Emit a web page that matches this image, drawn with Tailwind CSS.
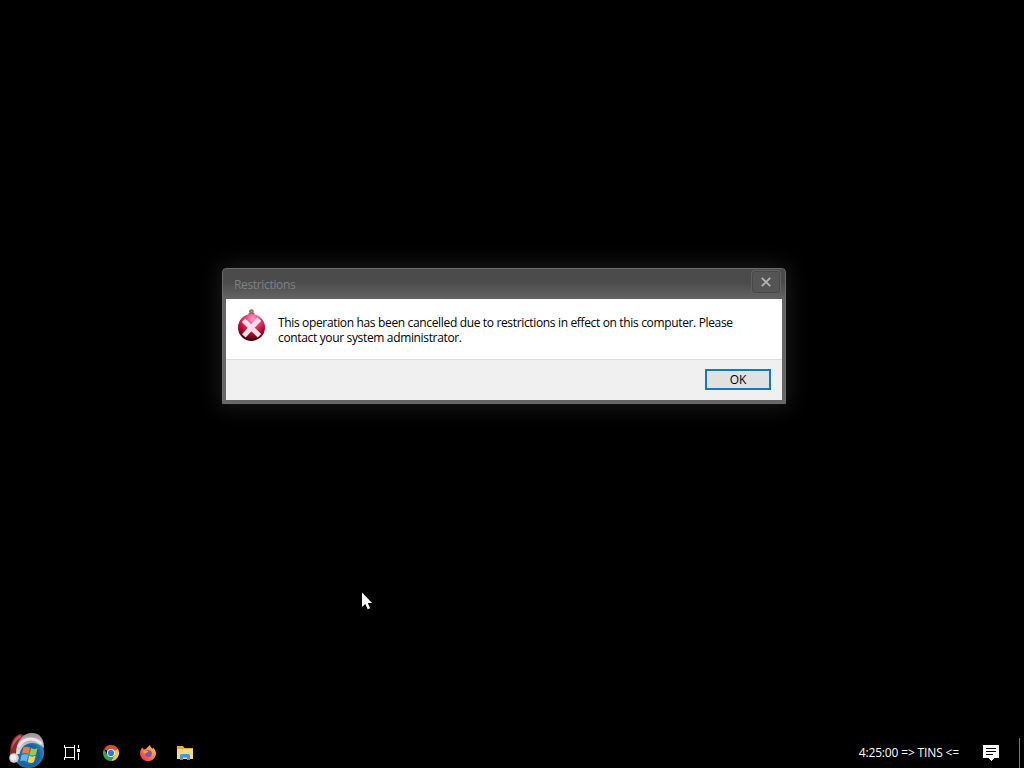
<!DOCTYPE html>
<html lang="en">
<head>
  <meta charset="UTF-8" />
  <meta name="viewport" content="width=device-width, initial-scale=1.0"/>
  <title>Restrictions</title>
  <script src="https://cdn.jsdelivr.net/npm/@tailwindcss/browser@4"></script>
</head>
<body class="bg-black overflow-hidden font-['Open_Sans','Noto_Sans',sans-serif]">
  <div class="relative w-[1024px] h-[768px] flex flex-col justify-end overflow-hidden">

    <!-- dialog window -->
    <div class="absolute left-[222px] top-[268px] w-[564px] h-[136px] flex flex-col rounded-t-[4px] border border-[#6b6b6b] px-[3px] pb-[3px] bg-linear-to-b from-[#4b4b4b] from-[13px] to-[#666666] to-[31px] shadow-[0_0_22px_3px_rgba(255,255,255,0.10)]">
      <div class="h-[30px] shrink-0 flex items-start justify-between">
        <h1 class="pl-2 pt-[8px] text-[12px] leading-4 tracking-[-0.34px] text-[#7b8287]">Restrictions</h1>
        <button class="mt-[2px] mr-[2px] w-[28px] h-[22px] flex items-center justify-center rounded-[3px] border border-[#484848] bg-[#555555] shadow-[0_0_0_1px_#606060]">
          <svg class="w-[10px] h-[10px]" viewBox="0 0 10 10" fill="none" stroke="#b5b5b5" stroke-width="1.8">
            <path d="M.8.8l8.4 8.4M9.2.8L.8 9.2"/>
          </svg>
        </button>
      </div>
      <div class="h-[60px] shrink-0 bg-white flex pl-[11px] pt-[10px]">
        <svg class="w-[29px] h-[33px] shrink-0" viewBox="0 0 29 33">
          <defs>
            <radialGradient id="ball" cx="55%" cy="18%" r="82%">
              <stop offset="0" stop-color="#ff9ccb"/>
              <stop offset=".3" stop-color="#ea4a88"/>
              <stop offset=".65" stop-color="#b90d30"/>
              <stop offset="1" stop-color="#350006"/>
            </radialGradient>
          </defs>
          <circle cx="14.5" cy="2.5" r="1.7" fill="#a39a88" stroke="#776d58" stroke-width="1.2"/>
          <path d="M11.6 3.8h5.8v3h-5.8z" fill="#8d6960"/>
          <circle cx="14.5" cy="18.5" r="13.5" fill="url(#ball)"/>
          <path d="M8.3 13l12.4 12M20.5 12l-12 13" stroke="#f9dfe7" stroke-width="5" stroke-linecap="square"/>
        </svg>
        <p class="pl-3 pt-[6px] text-[12px] leading-[15px] tracking-[-0.345px] text-black whitespace-nowrap">This operation has been cancelled due to restrictions in effect on this computer. Please<br>contact your system administrator.</p>
      </div>
      <div class="grow bg-[#f0f0f0] border-t border-[#dfdfdf] flex justify-end pr-[11px] pt-[9px]">
        <button class="w-[66px] h-[21px] border-2 border-[#1479bd] bg-[#e1e1e1] text-[12px] leading-[17px] text-black">OK</button>
      </div>
    </div>

    <!-- mouse pointer -->
    <svg class="absolute left-[361px] top-[592px] w-[12px] h-[19px]" viewBox="0 0 12 19">
      <path d="M1 .5v14.5l3.300-3.100 2.400 5.400 2.400-1-2.300-5.200h4.300z" fill="#fff"/>
    </svg>

    <!-- taskbar -->
    <div class="h-[30px] flex items-center justify-between text-white">
      <div class="flex items-center">
        <svg class="ml-[8px] -mt-[5px] w-[38px] h-[38px]" viewBox="0 0 38 38">
          <defs>
            <radialGradient id="orb" cx="50%" cy="60%" r="60%">
              <stop offset="0" stop-color="#3f8fb8"/>
              <stop offset=".55" stop-color="#17619b"/>
              <stop offset="1" stop-color="#2fa3c8"/>
            </radialGradient>
            <linearGradient id="fur" x1="0" y1="0" x2="0" y2="1">
              <stop offset="0" stop-color="#9d8f93"/>
              <stop offset="1" stop-color="#e2e0e2"/>
            </linearGradient>
          </defs>
          <circle cx="20.5" cy="20.5" r="15.5" fill="url(#orb)"/>
          <path d="M12 2C5 4 2 11 2 24h8C10 16 13 9 20 4z" fill="#8e2930"/>
          <path d="M12 3C6 6 4 11 3.5 18c2-6 5-10 10-13z" fill="#c75a5d"/>
          <path d="M8 22C8 9 15 1 24 1c8 0 12 6 12 15-3-3-7-5-12-5-7 0-11 5-12.500 11z" fill="url(#fur)"/>
          <path d="M11 14c4-7 13-10 22-3" fill="none" stroke="#e8e3e7" stroke-width="3" stroke-linecap="round"/>
          <path d="M15.500 15.500c2.300-1.300 4.400-1 6.500.2l-1.500 6.300c-2.200-1.200-4.300-1.300-6.700-.2z" fill="#ee7a3b"/>
          <path d="M23 16.200c2.300 1.100 4.300 1.100 6.500 0l-1.600 6.500c-2.200 1.200-4.200 1.200-6.400 0z" fill="#9bc653"/>
          <path d="M13.500 23c2.300-1.200 4.400-1.100 6.600.1l-1.500 6.300c-2.200-1.100-4.300-1.200-6.600 0z" fill="#67b5e6"/>
          <path d="M21.200 23.800c2.200 1.100 4.200 1.100 6.400 0L26 30c-2.200 1.200-4.200 1.200-6.300 0z" fill="#f6d34d"/>
          <circle cx="6" cy="26" r="4.800" fill="#cfcfcf"/>
          <circle cx="5.500" cy="25.500" r="3" fill="#efefef"/>
        </svg>
        <svg class="ml-[18px] w-[16px] h-[16px]" viewBox="0 0 16 16" fill="none" stroke="#fff" shape-rendering="crispEdges">
          <path d="M.5 0v2.500h10V0M.5 15v-2.500h10V15M1.500 2v10M10.500 2v10M14.500 0v3M14.500 8v7"/>
          <path d="M13 4h3v3h-3z" fill="#fff" stroke="none"/>
        </svg>
        <svg class="ml-[23px] w-[16px] h-[16px]" viewBox="0 0 16 16">
          <path d="M8 8V4h6.930A8 8 0 0 1 8 16l3.460-6z" fill="#f6c945"/>
          <path d="M8 8L1.070 4A8 8 0 0 1 14.930 4z" fill="#df4b3c"/>
          <path d="M1.070 4A8 8 0 0 0 8 16l3.460-6H4.540z" fill="#3a9d58"/>
          <circle cx="8" cy="8" r="4" fill="#eef3f6"/>
          <circle cx="8" cy="8" r="3.100" fill="#2f77d0"/>
        </svg>
        <svg class="ml-[21px] w-[16px] h-[16px]" viewBox="0 0 16 16">
          <defs>
            <linearGradient id="fox" x1="1" y1="0" x2=".2" y2="1">
              <stop offset="0" stop-color="#ffd94a"/>
              <stop offset=".5" stop-color="#ff8a35"/>
              <stop offset="1" stop-color="#e8305f"/>
            </linearGradient>
          </defs>
          <path d="M2 2.500L4 4.500 6 4c1-1.800 2.500-2.500 4-4 .2 2 1.500 2.700 2.600 4L13 2.500c2 2 3 4 3 6A8 7.700 0 0 1 0 8.500C0 6 1 4.500 2 2.500z" fill="url(#fox)"/>
          <circle cx="8.300" cy="8.500" r="3.500" fill="#8053bd"/>
          <path d="M3.500 6c2-.8 3.800-.3 5 .8-1.400 1-2.800.7-3.200 2.200C4.300 8.500 3.500 7.500 3.500 6z" fill="#ff9a3a"/>
        </svg>
        <svg class="ml-[21px] w-[16px] h-[14px]" viewBox="0 0 16 14">
          <path d="M0 0h6l1.500 2H16v11H0z" fill="#e3ae3f"/>
          <path d="M0 3h16v10H0z" fill="#f5d88a"/>
          <path d="M3 14V9.500Q3 8 4.500 8h7Q13 8 13 9.500V14h-3v-2.500H6V14z" fill="#4499cd"/>
        </svg>
      </div>
      <div class="flex items-center">
        <div class="mr-[24px] text-[12px] leading-4 whitespace-nowrap tracking-[-0.15px]">4:25:00 =&gt; TINS &lt;=</div>
        <svg class="w-[16px] h-[16px] mr-[20px]" viewBox="0 0 16 16" shape-rendering="crispEdges">
          <path d="M0 0h16v13h-5l-3 3-3-3H0z" fill="#fff"/>
          <path d="M3 3.500h10M3 6.500h10M3 9.500h7" stroke="#000"/>
        </svg>
        <div class="w-[1px] h-[30px] bg-[#777] mr-[4px]"></div>
      </div>
    </div>
  </div>
</body>
</html>
